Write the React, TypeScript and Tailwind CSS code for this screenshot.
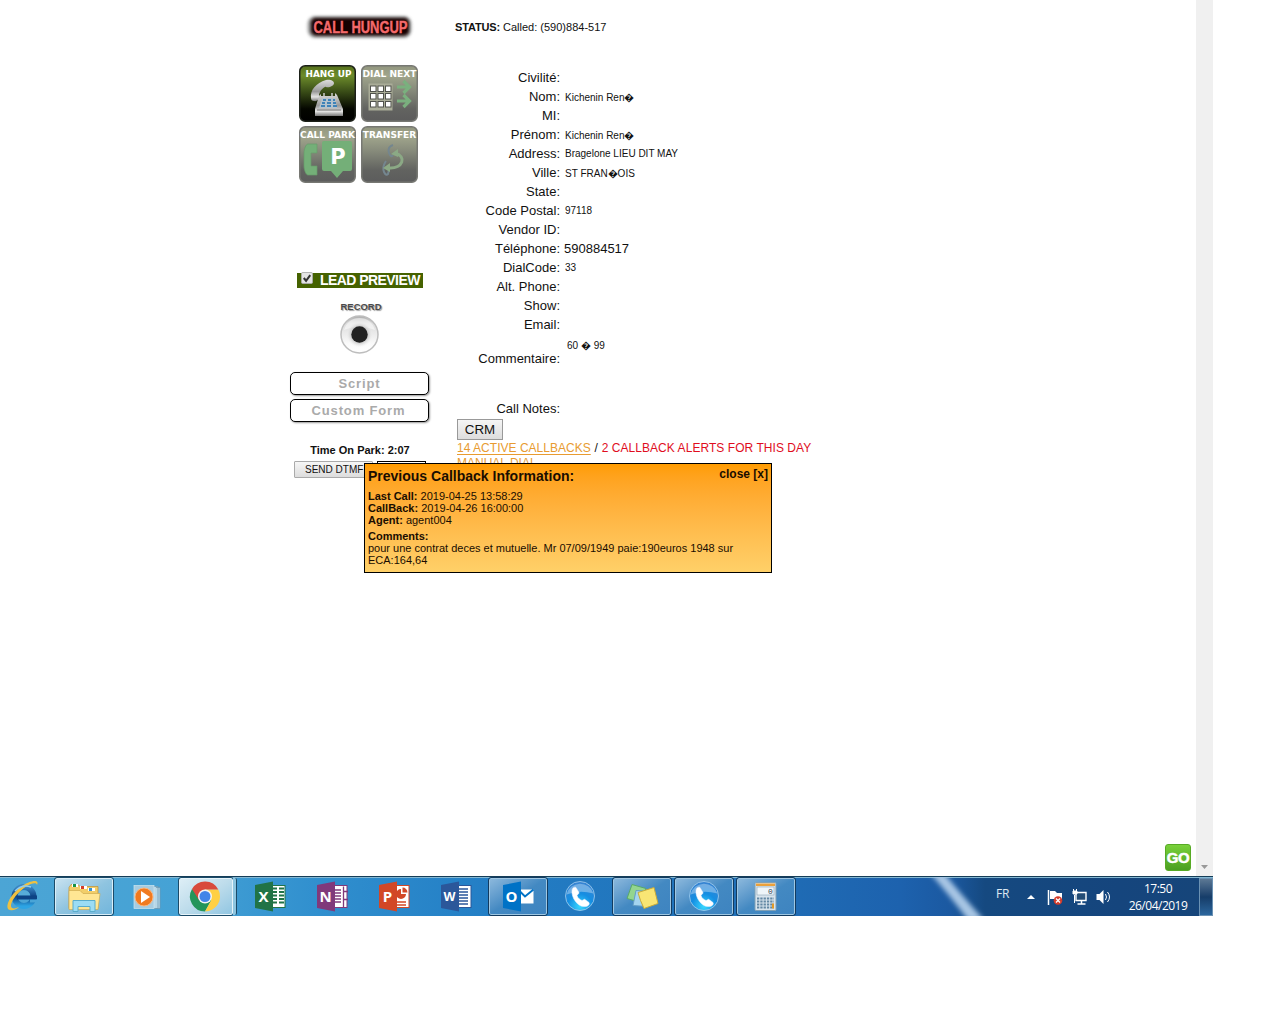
import React from "react";

const ARIAL = "font-['Liberation_Sans',Arial,sans-serif]";

function HungupBadge() {
  return (
    <svg className="ml-[13px] block h-[28px] w-[112px] overflow-visible" viewBox="0 0 112 28">
      <defs>
        <filter id="glow" x="-10%" y="-30%" width="120%" height="160%">
          <feGaussianBlur stdDeviation="1.6" />
        </filter>
      </defs>
      <rect x="4.500" y="2" width="104" height="22" rx="8" fill="#888" filter="url(#glow)" opacity=".8" />
      <rect x="8" y="4" width="98" height="17.500" rx="5" fill="#180606" filter="url(#glow)" />
      <text x="10.500" y="18.500" textLength="94" lengthAdjust="spacingAndGlyphs" fontFamily="Liberation Sans" fontWeight="bold" fontSize="16" fill="#f4696b" stroke="#f4696b" strokeWidth=".4">CALL HUNGUP</text>
    </svg>
  );
}

function PadButton({ label, active, children, width }: { label: string; active?: boolean; children: React.ReactNode; width: number }) {
  const id = label.replace(" ", "");
  return (
    <svg className="block h-[57px] w-[57px] overflow-visible" viewBox="0 0 57 57">
      <defs>
        <linearGradient id={id} x1="0" y1="0" x2="0" y2="1">
          <stop offset="0" stopColor={active ? "#55701c" : "#92967f"} />
          <stop offset=".18" stopColor={active ? "#6d8c2b" : "#a0a58c"} />
          <stop offset=".45" stopColor={active ? "#3c5018" : "#85897a"} />
          <stop offset=".78" stopColor={active ? "#040600" : "#626360"} />
          <stop offset="1" stopColor={active ? "#000" : "#5c5c5c"} />
        </linearGradient>
      </defs>
      <rect x=".75" y=".75" width="55.500" height="55.500" rx="5.500" fill={`url(#${id})`} stroke={active ? "#1c2018" : "#777873"} strokeWidth="1.500" />
      {children}
      <text x={active ? 29.500 : 28.500} y="12" textAnchor="middle" textLength={width} lengthAdjust="spacingAndGlyphs" fontFamily="DejaVu Sans" fontWeight="bold" fontSize="9.400" fill="#fff">{label}</text>
    </svg>
  );
}

function KeyPad() {
  return (
    <div className="ml-[9px] mt-[23px] grid w-[119px] grid-cols-[57px_57px] gap-x-[5px] gap-y-[4px]">
      <PadButton label="HANG UP" active width={46}>
        <defs>
          <linearGradient id="silver" x1="0" y1="0" x2="0" y2="1">
            <stop offset="0" stopColor="#ddd" /><stop offset=".55" stopColor="#999" /><stop offset=".8" stopColor="#e4e4e4" /><stop offset="1" stopColor="#777" />
          </linearGradient>
        </defs>
        <path d="M12 33c-1-8 5-15 15-18 4-1 8 1 8 3 0 3-5 5-8 4-1-1-6 3-7 8 2 3-2 7-5 6-2 0-3-1-3-3z" fill="url(#silver)" />
        <path d="M20 31l2-2v2h14v-3l2 2 6 14v7H16v-7z" fill="url(#silver)" />
        <path d="M25 28v5M33 28v5" stroke="#ccc" strokeWidth="1.500" />
        <path d="M23 33h13l2 10H20z" fill="#b5c3cd" />
        <path d="M24 35h3m2 0h3m2 0h2M23 38h3m2 0h4m2 0h3M22 41h4m2 0h4m2 0h4" stroke="#3f83b8" strokeWidth="2" />
        <path d="M18 45h24" stroke="#777" />
      </PadButton>
      <PadButton label="DIAL NEXT" width={54}>
        <path d="M7.500 18.500h24v27h-24z" fill="#aaad98" />
        {[21, 28.5, 36.5].map((y) => [9.5, 17, 24.5].map((x) => (
          <rect key={`${x}-${y}`} x={x} y={y} width="5.500" height="5.500" fill="#fff" stroke="#50524c" />
        )))}
        <path d="M36 22h12M42.500 16l6 6-6 6M36 36h12M42.500 30l6 6-6 6" fill="none" stroke="#7ab07e" strokeWidth="3.200" />
      </PadButton>
      <PadButton label="CALL PARK" width={55}>
        <path d="M9 18h9v9h-6v13h6v9H9c-2 0-4-5-4-9V27c0-4 2-9 4-9z" fill="#74af78" stroke="#679b6b" strokeWidth=".7" />
        <path d="M25 15h26q2 0 2 2v26q0 2-2 2h-7l-6 7-6-7h-7q-2 0-2-2V17q0-2 2-2z" fill="#74af78" />
        <text x="39" y="37.500" textAnchor="middle" fontFamily="DejaVu Sans" fontWeight="bold" fontSize="21" fill="#fff">P</text>
      </PadButton>
      <PadButton label="TRANSFER" width={53.5}>
        <path d="M32 19q-6 2-4 8 2 5 4 2M25 35q-4 6-2 11 2 4 4 2l1-4" fill="none" stroke="#74868f" strokeWidth="2" />
        <path d="M34 27c12 3 8 16-6 15" fill="none" stroke="#8ba985" strokeWidth="3" />
        <path d="M30 28l7-5v8zM22 42l7-5v9z" fill="#8ba985" />
      </PadButton>
    </div>
  );
}

function RecordButton() {
  return (
    <svg className="ml-[48px] mt-[12px] block h-[56px] w-[46px] overflow-visible" viewBox="0 0 46 56">
      <defs>
        <linearGradient id="knob" x1="0" y1="0" x2="0" y2="1">
          <stop offset="0" stopColor="#aaa" /><stop offset=".2" stopColor="#ddd" /><stop offset=".5" stopColor="#ececec" /><stop offset=".75" stopColor="#fafafa" /><stop offset="1" stopColor="#fff" />
        </linearGradient>
        <radialGradient id="halo">
          <stop offset=".5" stopColor="#aaa" /><stop offset="1" stopColor="#eee" stopOpacity="0" />
        </radialGradient>
      </defs>
      <text x="2.500" y="10" textLength="41" lengthAdjust="spacingAndGlyphs" fontFamily="Liberation Sans" fontWeight="bold" fontSize="9" fill="#4a4a4a" className="[text-shadow:1px_1px_1px_#999]">RECORD</text>
      <circle cx="21.500" cy="34.500" r="18.500" fill="url(#knob)" stroke="#bdbdbd" strokeWidth="1.500" />
      <path d="M6 30q15-7 31 0-4-12-15.500-12T6 30z" fill="#fff" opacity=".5" />
      <circle cx="21.500" cy="34.500" r="13" fill="url(#halo)" />
      <circle cx="21.500" cy="34.500" r="8.200" fill="#222" />
    </svg>
  );
}

function LeftPanel() {
  const tab = "flex h-[23px] w-[139px] items-center justify-center whitespace-nowrap rounded-[5px] border border-black bg-white text-[13px] font-bold leading-none text-[#aaa] shadow-[1px_1px_2px_#999]";
  return (
    <div className="w-[140px] shrink-0 pt-[14px]">
      <HungupBadge />
      <KeyPad />
      <div className="ml-[7px] mt-[90px] flex h-[15px] w-[126px] items-center bg-[#456200]">
        <svg className="-mt-[5px] ml-[4px] h-[12px] w-[12px]" viewBox="0 0 13 13">
          <rect x=".5" y=".5" width="12" height="12" rx="1.500" fill="#e4e4e4" stroke="#aaa" />
          <path d="M3 6.500l2.500 3L10 3.500" fill="none" stroke="#333" strokeWidth="2.200" />
        </svg>
        <span className="ml-[7px] whitespace-nowrap text-[14px] font-bold leading-[15px] tracking-[-0.56px] text-white">LEAD PREVIEW</span>
      </div>
      <RecordButton />
      <div className={`mt-[16px] ${tab}`}><span className="tracking-[0.85px]">Script</span></div>
      <div className={`mt-[4px] ${tab}`}><span className="-ml-[2px] tracking-[0.85px]">Custom Form</span></div>
      <div className="mt-[21px] h-[14px] whitespace-nowrap text-center text-[11px] font-bold leading-[14px]">Time On Park: 2:07</div>
      <div className="ml-[4px] mt-[4px] flex h-[17px] gap-[4px]">
        <div className="w-[79px] whitespace-nowrap rounded-[1px] border border-[#aaa] bg-gradient-to-b from-[#f6f6f6] to-[#ddd] pl-[10px] text-[10px] leading-[15px]">SEND DTMF</div>
        <div className="w-[49px] border border-black bg-white" />
      </div>
    </div>
  );
}

const fields: [string, string, string?][] = [
  ["Civilité:", ""],
  ["Nom:", "Kichenin Ren\uFFFD", "low"],
  ["MI:", ""],
  ["Prénom:", "Kichenin Ren\uFFFD", "low"],
  ["Address:", "Bragelone LIEU DIT MAY"],
  ["Ville:", "ST FRAN\uFFFDOIS", "low"],
  ["State:", ""],
  ["Code Postal:", "97118"],
  ["Vendor ID:", ""],
  ["Téléphone:", "590884517", "big"],
  ["DialCode:", "33"],
  ["Alt. Phone:", ""],
  ["Show:", ""],
  ["Email:", ""],
];

const valueStyle: Record<string, string> = {
  big: "ml-[4px] text-[13px]",
  low: "ml-[5px] mt-[3px] text-[10px] leading-[18px]",
  small: "ml-[5px] mt-px text-[10px] leading-[18px]",
};

function LeadForm() {
  const label = "w-[105px] shrink-0 text-right text-[13px]";
  return (
    <div className="ml-[25px] w-[380px] whitespace-nowrap">
      <div className="pt-[20px] text-[11px] leading-[14px]"><b className="tracking-[-0.15px]">STATUS:</b> <span>Called: (590)884-517</span></div>
      <div className="mt-[34px]">
        {fields.map(([name, value, kind]) => (
          <div key={name} className="flex h-[19px] items-center leading-[19px]">
            <span className={label}>{name}</span>
            <span className={valueStyle[kind ?? "small"]}>{value}</span>
          </div>
        ))}
      </div>
      <div className="flex h-[50px] leading-[19px]">
        <span className={`${label} pt-[15px]`}>Commentaire:</span>
        <span className="ml-[7px] pt-[2px] text-[10px]">60 {"\uFFFD"} 99</span>
      </div>
      <div className="mt-[15px] flex h-[19px] leading-[19px]"><span className={label}>Call Notes:</span></div>
      <div className="ml-[2px] mt-px flex h-[21px] w-[46px] items-center justify-center border border-[#999] bg-gradient-to-b from-[#f5f5f5] to-[#ddd] pt-px text-[13.333px]">CRM</div>
      <div className="ml-[2px] mt-px text-[12px] leading-[14px]">
        <span className="tracking-[0.02px] text-[#e89b30] underline underline-offset-2">14 ACTIVE CALLBACKS</span>
        <span className="tracking-[0.3px]"> / </span>
        <span className="tracking-[0.05px] text-[#e00d1e]">2 CALLBACK ALERTS FOR THIS DAY</span>
      </div>
      <div className="ml-[2px] pt-px text-[12px] leading-[15px] text-[#e89b30] underline">MANUAL DIAL</div>
    </div>
  );
}

function CallbackPopup() {
  return (
    <div className="absolute left-[364px] top-[463px] h-[110px] w-[408px] whitespace-nowrap border border-black bg-gradient-to-b from-[#ff9c00] to-[#ffd068] px-[3px] text-[11px] leading-[12px] text-[#1a0d00]">
      <div className="flex justify-between pt-[4px] leading-[16px]">
        <b className="text-[14px]">Previous Callback Information:</b>
        <b className="-mt-[2px] text-[12px]">close [x]</b>
      </div>
      <div className="mt-[6px]"><b>Last Call:</b> 2019-04-25 13:58:29</div>
      <div><b>CallBack:</b> 2019-04-26 16:00:00</div>
      <div><b>Agent:</b> agent004</div>
      <div className="mt-[4px]"><b>Comments:</b></div>
      <div>pour une contrat deces et mutuelle. Mr 07/09/1949 paie:190euros 1948 sur</div>
      <div>ECA:164,64</div>
    </div>
  );
}

function Slot({ open, bright, children }: { open?: boolean; bright?: boolean; children: React.ReactNode }) {
  const frame = open
    ? bright
      ? "border-[#d9eef8] bg-gradient-to-br from-[#c8e2f0] via-[#8fc4e0] to-[#72b6dc] outline-[#1b4b69]"
      : "border-[#9fc7e2] bg-gradient-to-br from-[#8bb8dc] via-[#4389c2] to-[#3e84c0] outline-[#123b60]"
    : "border-transparent outline-transparent";
  return (
    <div className={`mr-[4px] h-[37px] w-[58px] shrink-0 rounded-[2px] border outline outline-1 ${frame}`}>
      <svg className="-ml-px -mt-px h-[37px] w-[58px]" viewBox="0 .5 58 37">{children}</svg>
    </div>
  );
}

function Office({ letter, color, kind }: { letter: string; color: string; kind: string }) {
  return (
    <g>
      {kind !== "mail" && <rect x="29" y="8" width="15" height="22" fill="#fff" stroke={color} />}
      {kind === "sheet" && <path d="M31 11h5m2 0h5M31 14.500h5m2 0h5M31 18h5m2 0h5M31 21.500h5m2 0h5M31 25h5m2 0h5" stroke={color} strokeWidth="2" />}
      {kind === "lines" && <path d="M31 11.500h10M31 14.500h10M31 17.500h10M31 20.500h10M31 23.500h10M31 26.500h10" stroke={color} strokeWidth="1.500" />}
      {kind === "note" && <path d="M31 12.500h7M31 15.500h7M31 18.500h7M31 21.500h7M31 24.500h7M40.500 9v21M41 14h4M41 22h4" stroke={color} strokeWidth="1.300" />}
      {kind === "slide" && <><path d="M36 11.500v5h5a5 5 0 1 1-5-5z" fill={color} /><path d="M37.500 10a5 5 0 0 1 5 5h-5z" fill={color} /><path d="M32 24.500h9M32 27.500h9" stroke={color} strokeWidth="1.500" /></>}
      {kind === "mail" && <><rect x="30" y="12" width="14.500" height="14" fill="#fff" /><path d="M30 13l6 6 8.500-7" fill="none" stroke={color} strokeWidth="2" /></>}
      <path d="M14 7.500L32 4v30l-18-3.500z" fill={color} />
      <text x="22.500" y={letter === "W" ? 23.5 : 24.5} textAnchor="middle" textLength={letter === "W" ? 12 : undefined} lengthAdjust="spacingAndGlyphs" fontFamily="Open Sans" fontWeight="bold" fontSize={letter === "W" ? 13 : 15} fill="#fff">{letter}</text>
    </g>
  );
}

function PhoneGlobe({ id }: { id: string }) {
  return (
    <g>
      <defs>
        <radialGradient id={id} cx=".5" cy=".85" r=".85">
          <stop offset="0" stopColor="#38d8ff" /><stop offset=".5" stopColor="#158ee2" /><stop offset="1" stopColor="#3a82d0" />
        </radialGradient>
      </defs>
      <circle cx="29" cy="18.500" r="14.500" fill={`url(#${id})`} stroke="#a6cfee" strokeWidth=".8" />
      <path d="M15.500 17a14 14 0 0 1 27-1q-14-4-27 1z" fill="#c5e1f7" opacity=".45" />
      <path d="M21 13c0-3 3-4 4-3l3 5c0 2-2 2-2 3 1 3 3 4 5 5 1 0 2-2 3-1l4 3c1 2-1 4-4 4-7 1-14-9-13-16z" fill="#fff" stroke="#eef" strokeWidth=".5" />
    </g>
  );
}

function Taskbar() {
  return (
    <div className="flex h-[40px] w-[1213px] items-center border-t border-[#153d58] bg-[linear-gradient(90deg,#4ca5d5_0px,#45a2d5_180px,#308fce_320px,#237ec5_490px,#206fb7_750px,#1d62ae_900px,#1b59a1_950px,#154980_985px,#15457d_1120px,#164579_1213px)] shadow-[inset_0_1px_0_#83b7d2]">
      <svg className="h-[39px] w-[55px] shrink-0" viewBox="0 0 55 39">
        <defs>
          <linearGradient id="ie" x1="0" y1="0" x2="0" y2="1">
            <stop offset="0" stopColor="#3a86c4" /><stop offset=".5" stopColor="#0d4384" /><stop offset="1" stopColor="#2da4e4" />
          </linearGradient>
        </defs>
        <circle cx="24" cy="19.500" r="9.500" fill="none" stroke="url(#ie)" strokeWidth="6" />
        <path d="M18 18.500h12q-1-5-6-5t-6 5z" fill="#58acd8" />
        <path d="M17 20.500h20" stroke="#0d4384" strokeWidth="4" />
        <path d="M30 22.500h8v3h-8z" fill="#49a4d6" />
        <path d="M37 8c3-6-7-5-16 2C9 18 4 32 10 33c3 1 7-1 9-3-4 2-8 2-8-1 0-6 10-18 20-22 3-1 6-1 6 1z" fill="#efc141" />
        <path d="M15 14q7-7 16-4" fill="none" stroke="#8fcdf0" strokeWidth="1.500" />
      </svg>
      <Slot open bright>
        <path d="M14 10l2-3h7l2 2h18v22H14z" fill="#f2ce69" stroke="#bd9138" strokeWidth=".7" />
        <path d="M17 8h6M25 10h7M33 12h7" stroke="#fff" strokeWidth="3" />
        <path d="M18 8h3" stroke="#169447" strokeWidth="3" /><path d="M26 10h3" stroke="#d43b2a" strokeWidth="3" /><path d="M34 12h3" stroke="#3792d0" strokeWidth="3" />
        <path d="M14 13h11l3 3h17l-2 16H14z" fill="#ffe693" stroke="#d0ac50" strokeWidth=".7" />
        <path d="M18 34V23h22v11h-5v-5H23v5z" fill="#9bdcf4" stroke="#5aaccb" />
      </Slot>
      <Slot>
        <path d="M36 9h5v22h-5M39 10h4v21h-4" fill="#b7d7e7" stroke="#6c9bb5" strokeWidth=".8" />
        <rect x="17" y="8" width="20" height="23" fill="#a6cce1" stroke="#cde5ef" strokeWidth=".7" />
        <circle cx="27" cy="19.500" r="9" fill="#f07a20" stroke="#ffb578" />
        <path d="M24 13.500l9 6-9 6z" fill="#fff" />
      </Slot>
      <div className="mr-[4px] flex h-[37px] w-[58px] shrink-0">
        <div className="h-[37px] w-[54px] shrink-0 rounded-[2px] border border-[#e6f4fa] bg-gradient-to-br from-[#ddeef6] via-[#bddceb] to-[#91c6e2] outline outline-1 outline-[#1b4b69]">
          <svg className="-mt-px h-[37px] w-[52px]" viewBox="0 .5 52 37">
            <path d="M12 11.500A15 15 0 0 0 25 34l6.500-11.300L25 19z" fill="#23955a" />
            <path d="M25 12h13.300A15 15 0 0 1 25 34l6-11z" fill="#ffd044" />
            <path d="M12 11.500A15 15 0 0 1 38.300 12H25l-6 10.500z" fill="#d84a3c" />
            <circle cx="25" cy="19" r="7" fill="#f4f4f4" /><circle cx="25" cy="19" r="5.500" fill="#4285e8" />
          </svg>
        </div>
        <div className="h-[37px] w-[4px] rounded-r-[2px] border-r border-[#1b4b69] bg-[#8dc5e0]" />
      </div>
      <Slot><Office letter="X" color="#217346" kind="sheet" /></Slot>
      <Slot><Office letter="N" color="#80397b" kind="note" /></Slot>
      <Slot><Office letter="P" color="#d24726" kind="slide" /></Slot>
      <Slot><Office letter="W" color="#2b579a" kind="lines" /></Slot>
      <Slot open><Office letter="O" color="#0072c6" kind="mail" /></Slot>
      <Slot><PhoneGlobe id="globe1" /></Slot>
      <Slot open>
        <path d="M19 7l14 4-5 14-14-4z" fill="#93d58f" stroke="#59a968" />
        <path d="M23 13l13 1-2 15-14-1z" fill="#a4d4ef" stroke="#649dc5" />
        <path d="M25 15l16-5 4 16-14 5q-4-8-6-16z" fill="#f9e574" stroke="#c8aa39" />
      </Slot>
      <Slot open><PhoneGlobe id="globe2" /></Slot>
      <Slot open>
        <rect x="18" y="5" width="21" height="28" rx="1" fill="#d8e4ed" stroke="#80a0b5" />
        <rect x="19" y="6" width="19" height="2.500" fill="#eba13b" />
        <rect x="20" y="9.500" width="17" height="8" fill="#eef5f9" stroke="#8da6b5" strokeWidth=".6" />
        <text x="31" y="16.500" fontFamily="Liberation Mono" fontSize="8" fill="#345">0</text>
        <path d="M20 21h17M20 24h17M20 27h17M20 30h17" stroke="#6388a4" strokeWidth="1.900" strokeDasharray="2.300 1" />
        <path d="M36 26v5" stroke="#e39b28" strokeWidth="2" />
      </Slot>
      <svg className="ml-[118px] h-[39px] w-[80px] shrink-0" viewBox="0 0 80 39">
        <defs><filter id="streak"><feGaussianBlur stdDeviation="2.5" /></filter></defs>
        <path d="M13-4H27Q42 15 67 43H51Q34 20 13-4z" fill="#a8c6e4" filter="url(#streak)" />
      </svg>
      <div className="flex h-[39px] flex-1 items-center text-white">
        <span className="-ml-px -mt-[6px] w-[16px] font-['Open_Sans'] text-[12px] leading-none tracking-[-0.1px] text-[#dde8f2]">FR</span>
        <svg className="ml-[13px] h-[39px] w-[90px] shrink-0" viewBox="0 0 90 39">
          <path d="M2 22l4-4 4 4z" fill="#fff" />
          <path d="M23.500 13v15" stroke="#fff" strokeWidth="1.500" /><path d="M25 14h5l2 2h5v8h-6l-2-2h-4z" fill="#fff" />
          <circle cx="33" cy="23.500" r="4.300" fill="#d43b2a" /><path d="M31 21.500l4 4m0-4l-4 4" stroke="#fff" strokeWidth="1.300" />
          <path d="M51 15.500h10v8H51z" fill="#244d76" stroke="#fff" strokeWidth="1.400" /><path d="M56.500 24v3m-4 0h8" stroke="#fff" strokeWidth="1.500" />
          <path d="M48 14h4v3h-4zM48.500 12v2m3-2v2M49.500 18v8" fill="#fff" stroke="#fff" strokeWidth="1" />
          <path d="M71.500 17h3l4-4v14l-4-4h-3z" fill="#fff" /><path d="M80.500 17q2 3 0 6M82.500 15q4 5 0 10" fill="none" stroke="#fff" />
        </svg>
        <div className="ml-[5px] w-[76px] text-center font-['Open_Sans'] text-[12px] leading-[17px] tracking-[-0.5px]"><div>17:50</div><div>26/04/2019</div></div>
        <div className="ml-auto h-[38px] w-[14px] border border-[#6b92b4] bg-gradient-to-b from-[#5c7894] via-[#163d69] to-[#2b669d]" />
      </div>
    </div>
  );
}

export default function App() {
  return (
    <div className={`h-[1024px] w-[1280px] overflow-hidden bg-white text-[#111] ${ARIAL}`}>
      <div className="relative flex h-[876px] w-[1213px] justify-between">
        <div className="flex pl-[290px]">
          <LeftPanel />
          <LeadForm />
        </div>
        <div className="flex w-[17px] flex-col items-center justify-end bg-[#f0f0f0] pb-[7px]">
          <svg className="h-[4px] w-[7px]" viewBox="0 0 7 4"><path d="M0 0h7L3.500 4z" fill="#999" /></svg>
        </div>
        <CallbackPopup />
        <div className="absolute left-[1165px] top-[844px] flex h-[27px] w-[26px] items-center justify-center rounded-[3px] border border-[#57aa25] bg-gradient-to-b from-[#79d13a] to-[#4b9f20] text-[15px] font-bold leading-none tracking-[-0.5px] text-white [-webkit-text-stroke:0.5px_white]">GO</div>
      </div>
      <Taskbar />
    </div>
  );
}
